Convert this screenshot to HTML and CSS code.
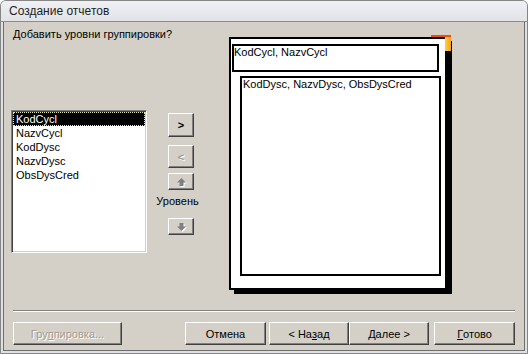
FILE: index.html
```html
<!DOCTYPE html>
<html>
<head>
    <title>Создание отчетов</title>
    <link rel="stylesheet" href="styles.css">
</head>
<body>
    <div class="window">
        <div class="titlebar">Создание отчетов</div>
        <div class="frame">
            <div class="dialog">
                <div class="top">
                    <div class="left">
                        <p class="prompt">Добавить уровни группировки?</p>
                        <div class="picker">
                            <ul class="fields">
                                <li class="selected">KodCycl</li>
                                <li>NazvCycl</li>
                                <li>KodDysc</li>
                                <li>NazvDysc</li>
                                <li>ObsDysCred</li>
                            </ul>
                            <div class="moves">
                                <button class="btn move">&gt;</button>
                                <button class="btn move off">&lt;</button>
                                <button class="btn arrow">
                                    <svg width="9" height="8" viewBox="0 0 9 8"><polygon points="4.5,0 9,4.5 6.5,4.5 6.5,8 2.5,8 2.5,4.5 0,4.5" fill="#808080"/></svg>
                                </button>
                                <span class="level">Уровень</span>
                                <button class="btn arrow down">
                                    <svg width="9" height="8" viewBox="0 0 9 8"><polygon points="4.5,8 9,3.5 6.5,3.5 6.5,0 2.5,0 2.5,3.5 0,3.5" fill="#808080"/></svg>
                                </button>
                            </div>
                        </div>
                    </div>
                    <div class="preview">
                        <div class="mark"></div>
                        <div class="group head">KodCycl, NazvCycl</div>
                        <div class="group detail">KodDysc, NazvDysc, ObsDysCred</div>
                    </div>
                </div>
                <div class="separator"></div>
                <div class="actions">
                    <button class="btn wide off">Гру<u>п</u>пировка...</button>
                    <button class="btn push cancel">Отмена</button>
                    <button class="btn push back">&lt; На<u>з</u>ад</button>
                    <button class="btn push"><u>Д</u>алее &gt;</button>
                    <button class="btn push finish"><u>Г</u>отово</button>
                </div>
            </div>
        </div>
    </div>
</body>
</html>
```

FILE: styles.css
```css
body {
    margin: 0;
    font-family: "Liberation Sans", Arial, sans-serif;
    font-size: 11px;
    color: #000;
    background: #fff;
}
.window {
    width: 528px;
    height: 354px;
    box-sizing: border-box;
    border: 1px solid #858585;
    border-radius: 6px 6px 0 0;
    background: #dfe0e4;
    display: flex;
    flex-direction: column;
    overflow: hidden;
}
.titlebar {
    height: 20px;
    line-height: 21px;
    padding-left: 8px;
    font-size: 12px;
    color: #1e1e1e;
    background: linear-gradient(#eef0f3, #e2e3e7);
    border-bottom: 1px solid #8c8c8c;
    flex: none;
}
.frame {
    flex: 1;
    display: flex;
    padding: 0 2px 2px;
}
.dialog {
    flex: 1;
    background: #d4d0c8;
    border: 1px solid #6e6e6e;
    border-top: none;
    display: flex;
    flex-direction: column;
}
.top {
    display: flex;
    height: 268px;
}
.left {
    width: 225px;
}
.prompt {
    margin: 6px 0 0 9px;
    line-height: 13px;
}
.picker {
    display: flex;
    margin: 69px 0 0 7px;
}
.fields {
    list-style: none;
    margin: 0;
    padding: 1px;
    width: 136px;
    height: 143px;
    box-sizing: border-box;
    background: #fff;
    border: 1px solid;
    border-color: #808080 #fff #fff #808080;
    box-shadow: inset 1px 1px 0 #404040, inset -1px -1px 0 #d4d0c8;
}
.fields li {
    height: 14px;
    line-height: 15px;
    padding-left: 3px;
}
.fields li.selected {
    background: #000;
    color: #fff;
    outline: 1px dotted #e8e8a0;
    outline-offset: -1px;
}
.moves {
    display: flex;
    flex-direction: column;
    align-items: center;
    width: 26px;
    margin: 3px 0 0 21px;
}
.btn {
    font-family: inherit;
    font-size: 11px;
    font-weight: normal;
    color: #000;
    background: #d4d0c8;
    border: 1px solid;
    border-color: #fff #404040 #404040 #fff;
    box-shadow: inset -1px -1px 0 #808080;
    padding: 0;
    margin: 0;
    display: flex;
    align-items: center;
    justify-content: center;
}
.btn.off {
    color: #a09c94;
    text-shadow: 1px 1px 0 #fff;
}
.move {
    width: 26px;
    height: 24px;
    font-weight: bold;
    margin-bottom: 8px;
}
.move.off {
    height: 23px;
    margin-bottom: 5px;
}
.arrow {
    width: 26px;
    height: 17px;
}
.arrow svg {
    filter: drop-shadow(1px 1px 0 #fff);
}
.level {
    line-height: 14px;
    margin: 4px 7px 10px 0;
    white-space: nowrap;
}
.preview {
    position: relative;
    margin-top: 15px;
    width: 218px;
    height: 253px;
    box-sizing: border-box;
    border: 2px solid #000;
    background: #fff;
    box-shadow: 5px 4px 0 #000;
}
.mark {
    position: absolute;
    left: 200px;
    top: -4px;
    width: 20px;
    height: 14px;
    border-top: 2px solid #f04a10;
    background: linear-gradient(90deg, transparent 14px, #ffd040 14px, #f8a020 20px);
}
.group {
    border: 2px solid #000;
    line-height: 13px;
    box-sizing: border-box;
}
.head {
    margin: 5px 0 0 1px;
    width: 207px;
    height: 28px;
}
.detail {
    margin: 4px 0 0 9px;
    width: 201px;
    height: 200px;
    padding-left: 1px;
}
.separator {
    margin: 20px 9px 0;
    border-top: 1px solid #808080;
    border-bottom: 1px solid #fff;
}
.actions {
    display: flex;
    margin: 10px 9px 0;
}
.actions .btn {
    height: 23px;
}
.wide {
    width: 109px;
}
.push {
    width: 80px;
}
.cancel {
    margin-left: auto;
    width: 81px;
}
.back {
    margin-left: 3px;
}
.finish {
    margin-left: 5px;
    width: 81px;
}
```
